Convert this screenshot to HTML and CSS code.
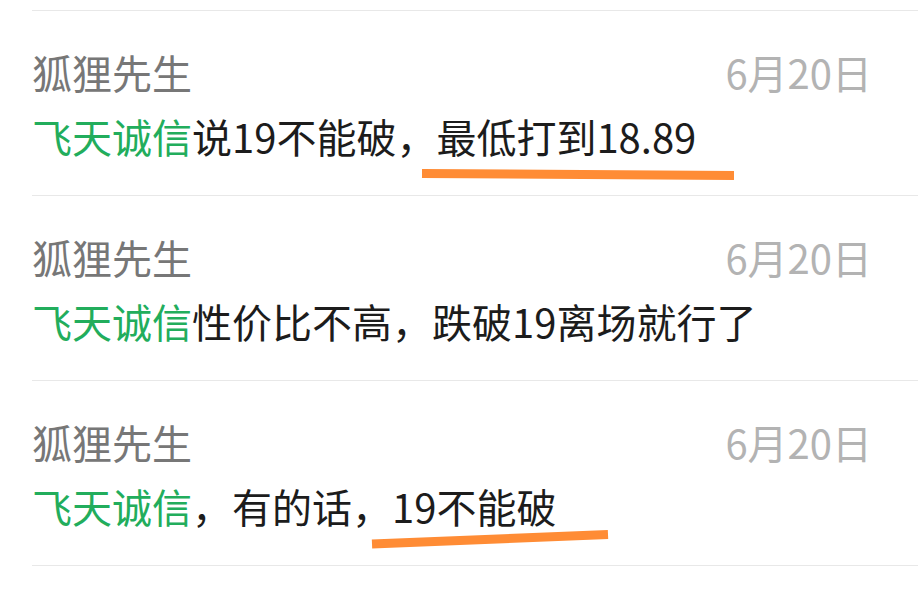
FILE: index.html
```html
<!DOCTYPE html>
<html lang="zh-CN">

<head>
    <meta charset="UTF-8">
    <meta name="viewport" content="width=device-width, initial-scale=1.0">
    <title>回复</title>
    <link rel="stylesheet" href="styles.css">
</head>

<body>
    <div class="lista">
        <div class="item">
            <div class="cabecera">
                <span class="nombre">狐狸先生</span>
                <span class="fecha">6月20日</span>
            </div>
            <div class="mensaje"><span class="usuario">飞天诚信</span>说19不能破，最低打到18.89</div>
            <!-- trazo naranja a mano -->
            <svg class="marca" width="886" height="184">
                <path d="M390 162.5 L702 164.5" stroke="#ff8c35" stroke-width="9" fill="none"/>
            </svg>
        </div>
        <div class="item">
            <div class="cabecera">
                <span class="nombre">狐狸先生</span>
                <span class="fecha">6月20日</span>
            </div>
            <div class="mensaje"><span class="usuario">飞天诚信</span>性价比不高，跌破19离场就行了</div>
        </div>
        <div class="item">
            <div class="cabecera">
                <span class="nombre">狐狸先生</span>
                <span class="fecha">6月20日</span>
            </div>
            <div class="mensaje"><span class="usuario">飞天诚信</span>，有的话，19不能破</div>
            <svg class="marca" width="886" height="184">
                <path d="M340 163 L576 153.5" stroke="#ff8c35" stroke-width="9" fill="none"/>
            </svg>
        </div>
    </div>
</body>

</html>
```

FILE: styles.css
```css
body {
    margin: 0;
    background-color: #fff;
    font-family: "Noto Sans CJK SC", "Noto Sans", sans-serif;
    overflow: hidden;
}

.lista {
    padding-top: 10px;
}

.item {
    position: relative;
    height: 184px;
    margin-left: 32px;
    border-top: 1px solid #e8e8e8;
}

.item:last-child {
    border-bottom: 1px solid #e8e8e8;
}

.cabecera {
    display: flex;
    justify-content: space-between;
    padding: 29px 46px 0 0;
    height: 64px;
    line-height: 64px;
    font-size: 40px;
}

.nombre {
    color: #777;
}

.fecha {
    color: #b3b3b3;
}

.mensaje {
    font-size: 40px;
    line-height: 64px;
    color: #1c1c1c;
}

.usuario {
    color: #22ad5c;
}

.marca {
    position: absolute;
    left: 0;
    top: 0;
    pointer-events: none;
}
```
